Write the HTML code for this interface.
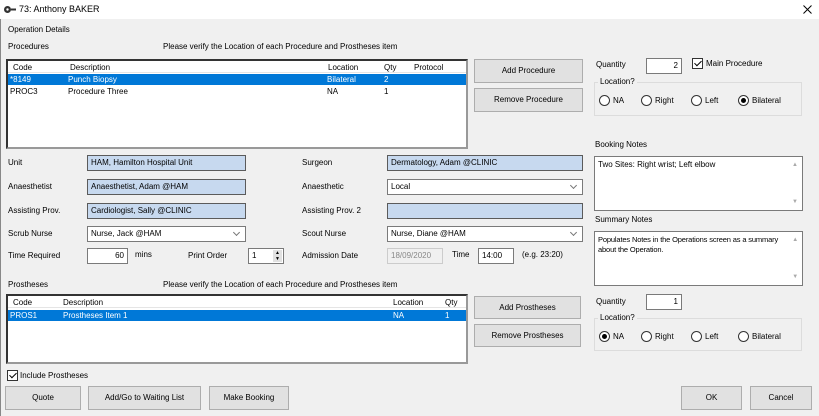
<!DOCTYPE html><html><head><meta charset="utf-8"><style>
*{box-sizing:border-box;margin:0;padding:0}
body{width:819px;height:416px;background:#f0f0f0;font-family:"Liberation Sans",sans-serif;font-size:8px;color:#000;position:relative;overflow:hidden}
.a{position:absolute;white-space:nowrap}
.in{position:absolute;height:16px;border:1px solid #7a7a7a;background:#fff;padding:2px 3px;white-space:nowrap}
.ro{background:#c7d9ef;border-color:#5b5b5b}
.dd::after{content:"";position:absolute;right:6px;top:3px;width:4px;height:4px;border-right:1px solid #777;border-bottom:1px solid #777;transform:rotate(45deg)}
.btn{position:absolute;background:#e1e1e1;border:1px solid #adadad;text-align:center;white-space:nowrap}
.list{position:absolute;background:#fff;border:2px solid #333;border-right-color:#999;border-bottom-color:#999}
.sel{position:absolute;left:0;right:0;height:11px;background:#0078d7;color:#fff}
.grp{position:absolute;border:1px solid #dcdcdc}
.rad{position:absolute;width:11px;height:11px;border:1px solid #333;border-radius:50%;background:#fff}
.rad.on::after{content:"";position:absolute;left:2px;top:2px;width:5px;height:5px;border-radius:50%;background:#000}
.cb{position:absolute;width:11px;height:11px;border:1px solid #333;background:#fff}
.cb::after{content:"";position:absolute;left:3px;top:0px;width:3px;height:6px;border-right:1px solid #000;border-bottom:1px solid #000;transform:rotate(45deg)}
.ta{position:absolute;background:#fff;border:1px solid #7a7a7a;padding:3px;white-space:nowrap;line-height:10px}
.sc{position:absolute;right:4px;font-size:6px;color:#aaa}
</style></head><body>
<div class="a" style="left:0;top:0;width:819px;height:19px;background:#fff"></div>
<div class="a" style="left:0;top:19px;width:1px;height:397px;background:#888"></div>
<svg class="a" style="left:3px;top:5px" width="14" height="9"><circle cx="4.5" cy="4.5" r="3.5" fill="#333"/><circle cx="4.5" cy="4.5" r="1.2" fill="#fff"/><rect x="8" y="3.5" width="5" height="2" fill="#333"/></svg>
<div class="a" style="left:19px;top:4px;font-size:9px">73: Anthony BAKER</div>
<svg class="a" style="left:803px;top:5px" width="9" height="9"><path d="M0.5 0.5L8.5 8.5M8.5 0.5L0.5 8.5" stroke="#000" stroke-width="1"/></svg>
<div class="a" style="left:8px;top:25px">Operation Details</div>
<div class="a" style="left:8px;top:42px">Procedures</div>
<div class="a" style="left:163px;top:42px">Please verify the Location of each Procedure and Prostheses item</div>
<div class="list" style="left:6px;top:59px;width:462px;height:90px">
<div class="a" style="left:0;top:0;width:458px;height:12px;border-bottom:1px solid #e5e5e5"></div>
<div class="a" style="left:5px;top:2px">Code</div><div class="a" style="left:62px;top:2px">Description</div><div class="a" style="left:320px;top:2px">Location</div><div class="a" style="left:376px;top:2px">Qty</div><div class="a" style="left:406px;top:2px">Protocol</div>
<div class="sel" style="top:13px"><div class="a" style="left:2px;top:1px">*8149</div><div class="a" style="left:60px;top:1px">Punch Biopsy</div><div class="a" style="left:319px;top:1px">Bilateral</div><div class="a" style="left:376px;top:1px">2</div></div>
<div class="a" style="left:2px;top:26px">PROC3</div><div class="a" style="left:60px;top:26px">Procedure Three</div><div class="a" style="left:319px;top:26px">NA</div><div class="a" style="left:376px;top:26px">1</div>
</div>
<div class="btn" style="left:474px;top:59px;width:109px;height:24px;line-height:22px">Add Procedure</div>
<div class="btn" style="left:474px;top:88px;width:109px;height:24px;line-height:22px">Remove Procedure</div>
<div class="a" style="left:596px;top:60px">Quantity</div>
<div class="in" style="left:646px;top:58px;width:36px;text-align:right">2</div>
<div class="cb" style="left:692px;top:58px"></div><div class="a" style="left:706px;top:59px">Main Procedure</div>
<div class="grp" style="left:594px;top:82px;width:208px;height:34px"></div>
<div class="a" style="left:598px;top:77px;background:#f0f0f0;padding:0 2px">Location?</div>
<div class="rad" style="left:599px;top:95px"></div><div class="a" style="left:613px;top:96px">NA</div>
<div class="rad" style="left:641px;top:95px"></div><div class="a" style="left:655px;top:96px">Right</div>
<div class="rad" style="left:691px;top:95px"></div><div class="a" style="left:705px;top:96px">Left</div>
<div class="rad on" style="left:738px;top:95px"></div><div class="a" style="left:752px;top:96px">Bilateral</div>
<div class="a" style="left:595px;top:140px">Booking Notes</div>
<div class="ta" style="left:594px;top:156px;width:209px;height:55px">Two Sites: Right wrist; Left elbow<div class="sc" style="top:3px">▲</div><div class="sc" style="bottom:3px">▼</div></div>
<div class="a" style="left:595px;top:215px">Summary Notes</div>
<div class="ta" style="left:594px;top:231px;width:209px;height:55px;font-size:7.5px;letter-spacing:-0.15px">Populates Notes in the Operations screen as a summary<br>about the Operation.<div class="sc" style="top:3px">▲</div><div class="sc" style="bottom:3px">▼</div></div>
<div class="a" style="left:8px;top:158px">Unit</div><div class="in ro" style="left:87px;top:155px;width:159px">HAM, Hamilton Hospital Unit</div>
<div class="a" style="left:8px;top:182px">Anaesthetist</div><div class="in ro" style="left:87px;top:179px;width:159px">Anaesthetist, Adam @HAM</div>
<div class="a" style="left:8px;top:206px">Assisting Prov.</div><div class="in ro" style="left:87px;top:203px;width:159px">Cardiologist, Sally @CLINIC</div>
<div class="a" style="left:8px;top:229px">Scrub Nurse</div><div class="in dd" style="left:87px;top:226px;width:159px">Nurse, Jack @HAM</div>
<div class="a" style="left:8px;top:251px">Time Required</div><div class="in" style="left:87px;top:248px;width:41px;text-align:right">60</div>
<div class="a" style="left:135px;top:250px">mins</div><div class="a" style="left:188px;top:251px">Print Order</div>
<div class="in" style="left:248px;top:248px;width:36px">1<div class="a" style="right:1px;top:1px;width:9px;height:12px;background:#e1e1e1;font-size:5px;line-height:6px;text-align:center">▲<br>▼</div></div>
<div class="a" style="left:302px;top:158px">Surgeon</div><div class="in ro" style="left:387px;top:155px;width:196px">Dermatology, Adam @CLINIC</div>
<div class="a" style="left:302px;top:182px">Anaesthetic</div><div class="in dd" style="left:387px;top:179px;width:196px">Local</div>
<div class="a" style="left:302px;top:206px">Assisting Prov. 2</div><div class="in ro" style="left:387px;top:203px;width:196px"></div>
<div class="a" style="left:302px;top:229px">Scout Nurse</div><div class="in dd" style="left:387px;top:226px;width:196px">Nurse, Diane @HAM</div>
<div class="a" style="left:302px;top:251px">Admission Date</div><div class="in" style="left:387px;top:248px;width:56px;background:#f0f0f0;border-color:#ccc;color:#888">18/09/2020</div>
<div class="a" style="left:452px;top:250px">Time</div><div class="in" style="left:478px;top:248px;width:36px">14:00</div>
<div class="a" style="left:522px;top:250px">(e.g. 23:20)</div>
<div class="a" style="left:8px;top:280px">Prostheses</div>
<div class="a" style="left:163px;top:280px">Please verify the Location of each Procedure and Prostheses item</div>
<div class="list" style="left:6px;top:294px;width:462px;height:70px">
<div class="a" style="left:0;top:0;width:458px;height:12px;border-bottom:1px solid #e5e5e5"></div>
<div class="a" style="left:5px;top:2px">Code</div><div class="a" style="left:55px;top:2px">Description</div><div class="a" style="left:385px;top:2px">Location</div><div class="a" style="left:437px;top:2px">Qty</div>
<div class="sel" style="top:14px"><div class="a" style="left:2px;top:1px">PROS1</div><div class="a" style="left:55px;top:1px">Prostheses Item 1</div><div class="a" style="left:385px;top:1px">NA</div><div class="a" style="left:437px;top:1px">1</div></div>
</div>
<div class="btn" style="left:474px;top:296px;width:107px;height:23px;line-height:21px">Add Prostheses</div>
<div class="btn" style="left:474px;top:324px;width:107px;height:23px;line-height:21px">Remove Prostheses</div>
<div class="a" style="left:596px;top:297px">Quantity</div>
<div class="in" style="left:646px;top:294px;width:36px;text-align:right">1</div>
<div class="grp" style="left:594px;top:318px;width:208px;height:33px"></div>
<div class="a" style="left:598px;top:313px;background:#f0f0f0;padding:0 2px">Location?</div>
<div class="rad on" style="left:599px;top:331px"></div><div class="a" style="left:613px;top:332px">NA</div>
<div class="rad" style="left:641px;top:331px"></div><div class="a" style="left:655px;top:332px">Right</div>
<div class="rad" style="left:691px;top:331px"></div><div class="a" style="left:705px;top:332px">Left</div>
<div class="rad" style="left:738px;top:331px"></div><div class="a" style="left:752px;top:332px">Bilateral</div>
<div class="cb" style="left:7px;top:370px"></div><div class="a" style="left:20px;top:371px">Include Prostheses</div>
<div class="btn" style="left:5px;top:386px;width:76px;height:24px;line-height:22px">Quote</div>
<div class="btn" style="left:88px;top:386px;width:113px;height:24px;line-height:22px">Add/Go to Waiting List</div>
<div class="btn" style="left:209px;top:386px;width:80px;height:24px;line-height:22px">Make Booking</div>
<div class="btn" style="left:681px;top:386px;width:61px;height:24px;line-height:22px">OK</div>
<div class="btn" style="left:750px;top:386px;width:62px;height:24px;line-height:22px">Cancel</div>
</body></html>
